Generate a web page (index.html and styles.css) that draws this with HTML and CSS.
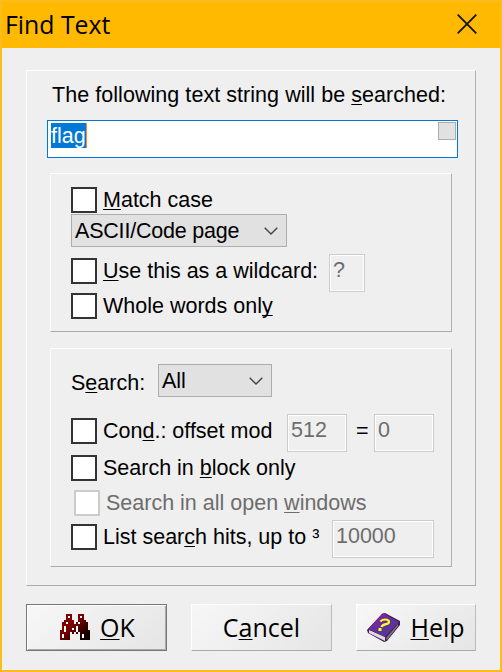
FILE: index.html
```html
<!DOCTYPE html>
<html lang="en">
<head>
<meta charset="utf-8">
<title>Find Text</title>
<link rel="stylesheet" href="styles.css">
</head>
<body>
<div class="window">
  <header class="titlebar">
    <span class="title">Find Text</span>
    <svg class="close" width="20" height="20" viewBox="0 0 20 20"><path d="M.7.7l18.6 18.6M19.3.7L.7 19.3"/></svg>
  </header>
  <main class="panel">
    <div class="prompt">The following text string will be <u>s</u>earched:</div>
    <div class="search-field"><span class="selection">flag</span><span class="expand"></span></div>
    <section class="group options">
      <div class="row"><i class="box"></i><span class="label"><u>M</u>atch case</span></div>
      <div class="select wide"><span class="encoding">ASCII/Code page</span><svg width="14" height="8" viewBox="0 0 14 8"><path d="M.7.7L7 7L13.3.7"/></svg></div>
      <div class="row wildcard"><i class="box"></i><span class="label"><u>U</u>se this as a wildcard:</span><span class="field f-wild">?</span></div>
      <div class="row whole"><i class="box"></i><span class="label">Whole words onl<u>y</u></span></div>
    </section>
    <section class="group scope">
      <div class="row direction"><span class="label">S<u>e</u>arch:</span><div class="select narrow"><span>All</span><svg width="14" height="8" viewBox="0 0 14 8"><path d="M.7.7L7 7L13.3.7"/></svg></div></div>
      <div class="row cond"><i class="box"></i><span class="label">Con<u>d</u>.: offset mod</span><span class="field f-mod">512</span><span class="equals">=</span><span class="field f-rem">0</span></div>
      <div class="row block"><i class="box"></i><span class="label">Search in <u>b</u>lock only</span></div>
      <div class="row disabled"><i class="box"></i><span class="label">Search in all open <u>w</u>indows</span></div>
      <div class="row hits"><i class="box"></i><span class="label">List sear<u>c</u>h hits, up to ³</span><span class="field f-hits">10000</span></div>
    </section>
  </main>
  <footer class="buttons">
    <div class="button ok">
      <svg width="30" height="26" viewBox="0 0 15 13" shape-rendering="crispEdges">
        <defs><linearGradient id="red" x1="0" y1="0" x2="1" y2="1"><stop offset=".4" stop-color="#800000"/><stop offset=".85" stop-color="#100000"/></linearGradient></defs>
        <path fill="url(#red)" d="M3 0h3v3h1v2h1v-1h1v-1h0v-3h3v3h1v1h1v4h1v5h-5v-4h-1v1h-1v-1h-1v1h-1v-1h-1v4h-5v-5h1v-4h1v-1h1z"/>
        <path fill="#fff" d="M4 1h1v1h-1zM10 1h1v1h-1zM3 4h1v1h-1zM9 4h1v1h-1zM2 6h1v3h-1zM8 6h1v3h-1zM6 7h1v1h-1zM1 10h1v2h-1zM11 10h1v2h-1z"/>
      </svg>
      <span><u>O</u>K</span>
    </div>
    <div class="button cancel"><span>C<u>a</u>ncel</span></div>
    <div class="button help">
      <svg width="33" height="30" viewBox="0 0 33 30">
        <defs><linearGradient id="cover" x1="0" y1="0" x2="1" y2="1"><stop stop-color="#981a98"/><stop offset=".5" stop-color="#60309a"/><stop offset="1" stop-color="#504090"/></linearGradient></defs>
        <path fill="#4c155c" d="M0 17L15 1L18 0L33 8V12L20 28L17 29L1 20Z"/>
        <path fill="#ddd" d="M2 17L18 24V28L2 20Z"/>
        <path fill="#777" d="M19 25L31 11V13L20 27Z"/>
        <path fill="url(#cover)" d="M1 16L16 0L32 9L18 24Z"/>
        <path fill="none" stroke="#ffff28" stroke-width="2.2" d="M13.5 8.500C15 6 22 5.500 22 9C22 12 15.500 10 14.500 14"/>
        <path fill="#ffff28" d="M11.500 15h3v3h-3z"/>
      </svg>
      <span><u>H</u>elp</span>
    </div>
  </footer>
</div>
</body>
</html>
```
FILE: styles.css
```css
* { box-sizing: border-box; }
body { margin: 0; font: 21.500px/26px "Liberation Sans", Arial, sans-serif; color: #000; }
u { text-decoration-thickness: 1px; text-underline-offset: 2px; text-decoration-skip-ink: none; }
.window { width: 502px; height: 672px; background: #efefef; border: 2px solid #fcbd1c; overflow: hidden; }
.titlebar { height: 46px; background: #ffb900; display: flex; align-items: center; justify-content: space-between; padding: 0 23px 2px 3px; }
.title { font: 24.8px/42px "Open Sans", "Noto Sans", sans-serif; }
.close { fill: none; stroke: #111; stroke-width: 1.8; }
.panel { margin: 22px 24px 0; height: 516px; padding: 11px 17px 0 20px; border: 1px solid; border-color: #fff #b2b2b2 #aaa #fafafa; }
.prompt { padding-left: 5px; white-space: nowrap; letter-spacing: .05px; }
.search-field { width: 411px; height: 38px; margin: 12px 0 0; border: 1px solid #0078d7; background: #fff; display: flex; justify-content: space-between; padding: 2px 1px 0 3px; }
.selection { height: 25px; background: #0078d7; color: #fff; border-right: 1px solid #ff8728; }
.expand { width: 18px; height: 18px; margin-top: -1px; background: #e1e1e1; border: 1px solid #adadad; }
.group { width: 402px; margin-left: 3px; padding-left: 20px; border: 1px solid; border-color: #fff #b2b2b2 #aaa #fafafa; }
.options { height: 159px; margin-top: 15px; padding-top: 13px; }
.scope { height: 219px; margin-top: 16px; padding-top: 15px; }
.row { display: flex; align-items: center; height: 26px; white-space: nowrap; }
.box { width: 26px; height: 26px; flex: none; background: #fff; border: 2px solid #333; margin-right: 6px; }
.label { flex: none; }
.select { height: 33px; border: 1px solid #adadad; background: #e1e1e1; display: flex; align-items: center; justify-content: space-between; padding: 0 8px 0 3px; }
.select svg { fill: none; stroke: #444; stroke-width: 1.4; }
.encoding { letter-spacing: -.2px; }
.wide { width: 216px; margin-top: 1px; }
.narrow { width: 114px; }
.field { flex: none; height: 38px; border: 1px solid #ccc; box-shadow: inset 0 0 0 1px #fff; color: #6d6d6d; padding: 2px 3px; }
.wildcard { height: 38px; margin-top: 7px; }
.wildcard .box, .wildcard .label, .cond .box, .cond .label, .hits .box, .hits .label { margin-bottom: 4px; }
.f-wild { width: 36px; margin-left: auto; margin-right: 86px; }
.whole { margin-top: 1px; }
.direction { height: 33px; }
.direction .label { width: 87px; padding-top: 4px; }
.cond { height: 38px; margin-top: 17px; }
.f-mod { width: 60px; margin-left: auto; }
.equals { width: 27px; padding-left: 9px; margin-bottom: 4px; }
.f-rem { width: 60px; margin-right: 17px; }
.block { margin-top: 3px; }
.disabled { margin: 9px 0 0 3px; color: #6d6d6d; }
.disabled .box { border-color: #ccc; }
.hits { height: 38px; margin-top: 4px; }
.f-hits { width: 102px; margin-left: auto; margin-right: 17px; }
.buttons { display: flex; gap: 24px; margin: 18px 24px 0; font: 25px/44px "Open Sans", "Noto Sans", sans-serif; }
.button { height: 47px; width: 141px; display: flex; align-items: center; justify-content: center; padding-bottom: 1px; border: 1px solid; border-color: #fff #bbb #aaa #fff; background: linear-gradient(135deg, #f7f7f7, #e5e5e5); }
.button.ok { border-color: #777; box-shadow: inset 1px 1px #fff, inset -1px -1px #aaa; gap: 10px; padding: 0 0 1px 2px; }
.button.help { width: 120px; gap: 10px; }
.button.help svg { margin-top: 1px; }
```
